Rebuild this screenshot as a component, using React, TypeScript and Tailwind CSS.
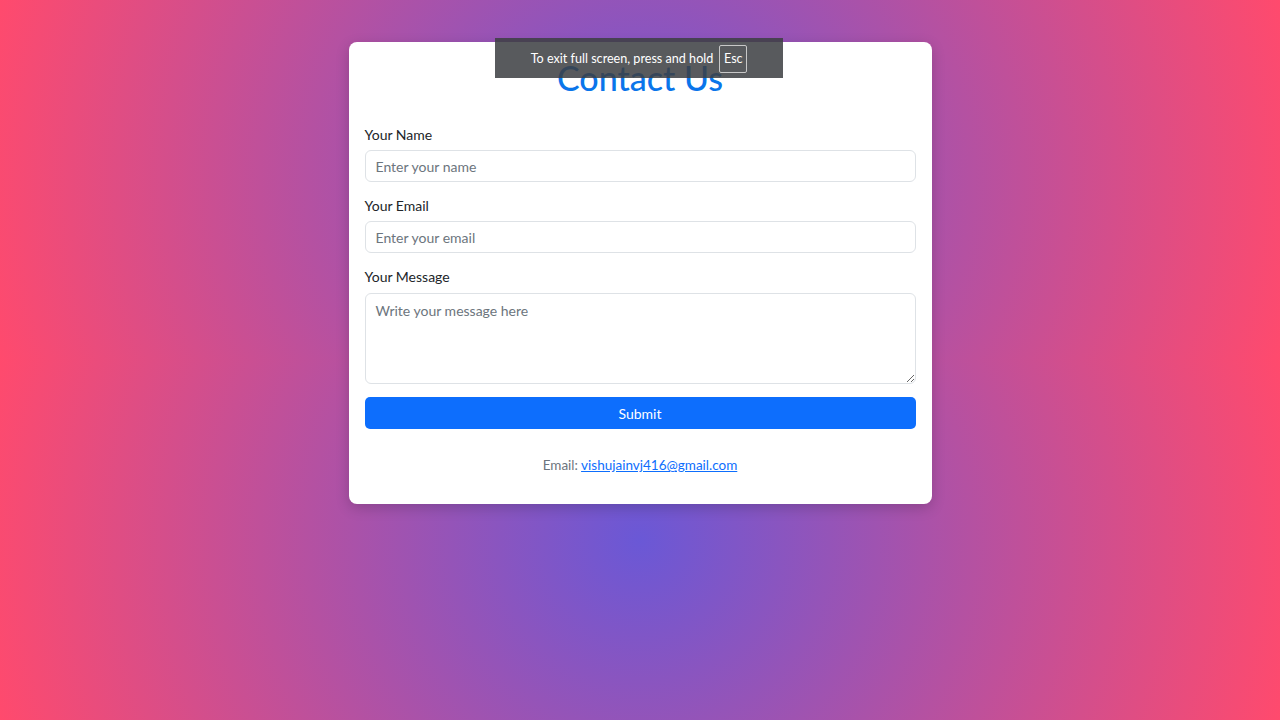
const FONT = "font-['Lato','Noto_Sans',sans-serif]";

function Field({ label, placeholder, type = 'text' }: { label: string; placeholder: string; type?: string }) {
  return (
    <div className="flex flex-col">
      <label className="mb-[5px] h-[21px] text-[14px] leading-[21px] text-[#212529]">{label}</label>
      <input
        type={type}
        placeholder={placeholder}
        className="h-[32px] rounded-[6px] border border-[#dee2e6] bg-white px-[10px] text-[14px] text-[#212529] outline-none placeholder:text-[#6c757d]"
      />
    </div>
  );
}

export default function App() {
  return (
    <div
      className={`relative min-h-[720px] w-full bg-[radial-gradient(circle_at_50%_50%,#6a58d6_0%,#ff4a6d_100%)] bg-[length:100%_360px] bg-repeat-y ${FONT}`}
    >
      {/* fullscreen notice */}
      <div className="absolute left-[495px] top-[38px] z-10 flex h-[40px] w-[288px] items-center justify-center gap-[6px] bg-[rgba(60,63,66,0.86)] pt-[2px] text-[12.6px] text-white">
        <span>To exit full screen, press and hold</span>
        <span className="flex h-[28px] w-[28px] items-center justify-center rounded-[2px] border border-[#c8c8c8]">Esc</span>
      </div>

      <div className="flex justify-center pt-[42px]">
        <div className="w-[583px] rounded-[8px] bg-white px-4 pb-[28px] pt-[12px] shadow-[0_4px_14px_rgba(0,0,0,0.18)]">
          <h1 className="mb-[22px] h-[48px] text-center text-[34px] font-medium leading-[48px] text-[#0a75ea]">Contact Us</h1>

          <div className="flex flex-col gap-[13px]">
            <Field label="Your Name" placeholder="Enter your name" />
            <Field label="Your Email" placeholder="Enter your email" type="email" />
            <div className="flex flex-col">
              <label className="mb-[6px] h-[21px] text-[14px] leading-[21px] text-[#212529]">Your Message</label>
              <textarea
                placeholder="Write your message here"
                className="h-[91px] rounded-[6px] border border-[#dee2e6] bg-white px-[10px] py-[6px] text-[14px] leading-[21px] outline-none placeholder:text-[#6c757d]"
              />
            </div>
            <button className="h-[32px] rounded-[5px] bg-[#0d6efd] text-[14px] text-white">Submit</button>
          </div>

          <p className="mt-[26px] text-center text-[13.5px] leading-[21px] text-[#6c757d]">
            Email:{' '}
            <a href="#" className="text-[#0d6efd] underline">
              vishujainvj416@gmail.com
            </a>
          </p>
        </div>
      </div>
    </div>
  );
}
